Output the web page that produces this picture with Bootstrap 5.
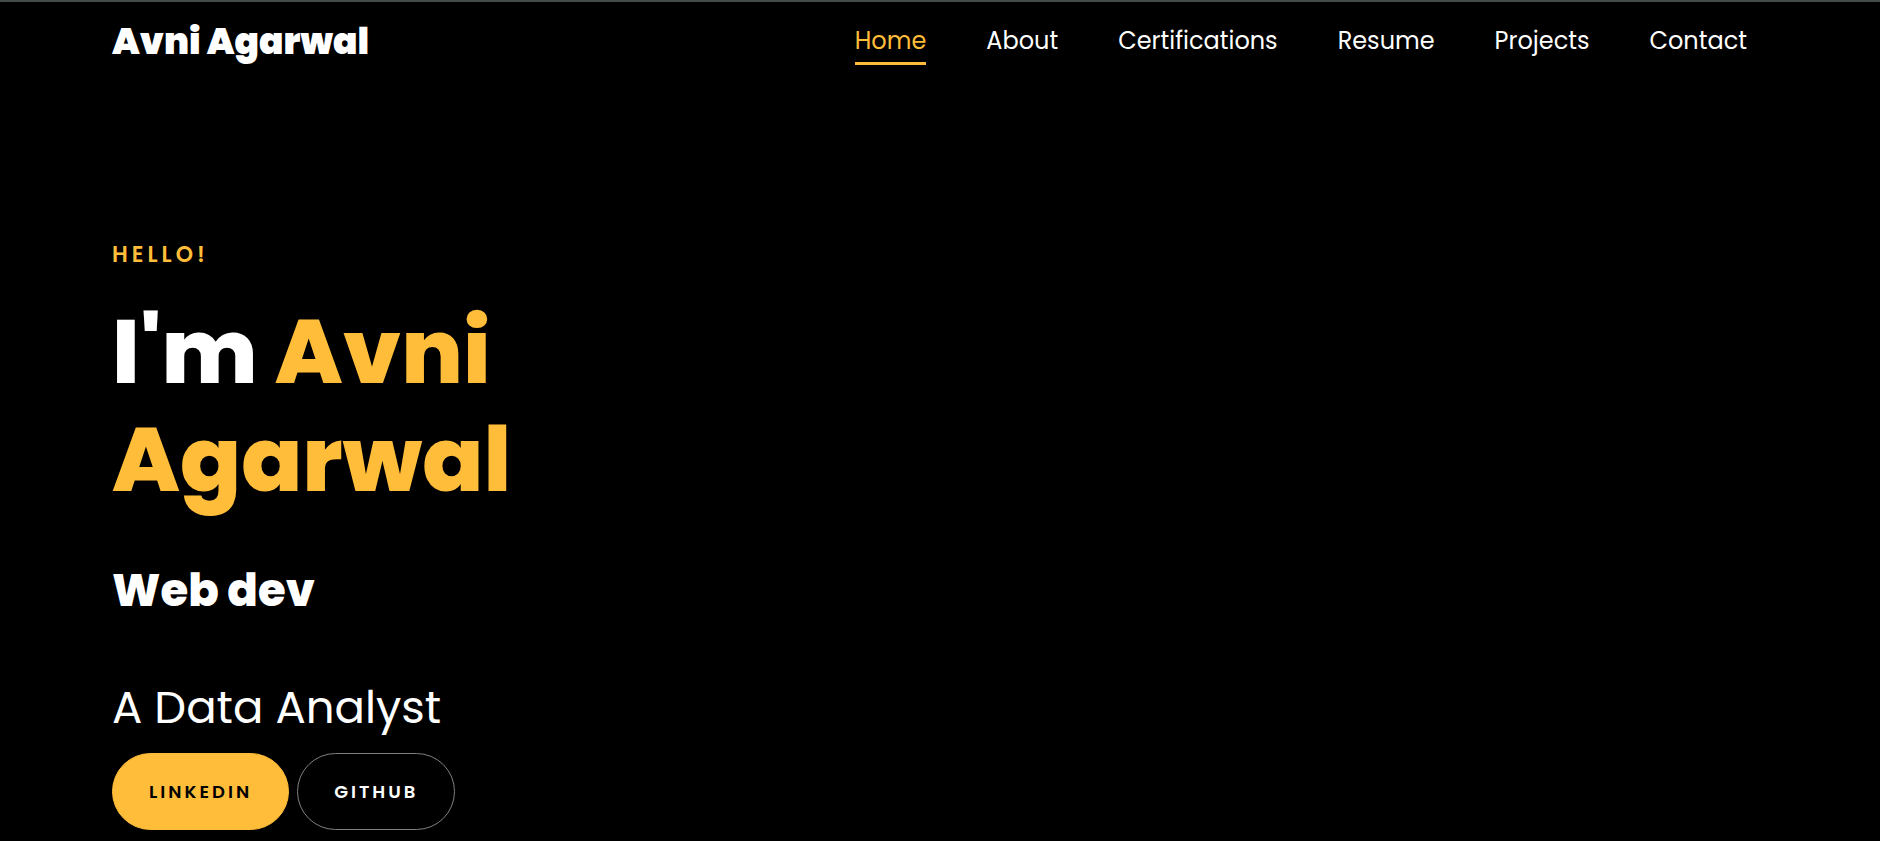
<!DOCTYPE html>
<html lang="en">
<head>
<meta charset="utf-8">
<meta name="viewport" content="width=device-width, initial-scale=1">
<title>Avni Agarwal</title>
<link href="https://cdn.jsdelivr.net/npm/bootstrap@5.3.0/dist/css/bootstrap.min.css" rel="stylesheet">
<style>
  :root { --accent: #ffbd39; }
  body { font-family: Poppins, Inter, sans-serif; background: #000; color: #fff; border-top: 2px solid #454b4b; }
  .page-gutter { padding-left: 112px; padding-right: 112px; }
  .site-nav { min-height: 84px; padding-top: 0; padding-bottom: 0; }
  .site-nav .navbar-brand { font-size: 36px; line-height: 54px; font-weight: 900; color: #fff; padding: 0; margin-top: -4px; }
  .site-nav .navbar-nav { gap: 16px 60px; padding-right: 21px; }
  .site-nav .navbar-nav .nav-link { font-size: 24px; line-height: 36px; color: #fff; padding: 0; }
  .site-nav .nav-link span { display: inline-block; padding-bottom: 3px; border-bottom: 3px solid transparent; }
  .site-nav .navbar-nav .nav-link.active { color: var(--accent); }
  .site-nav .nav-link.active span { border-color: var(--accent); }
  .hero { padding-top: 151px; padding-bottom: 8px; }
  .hello { font-size: 22px; line-height: 36px; font-weight: 600; letter-spacing: 4px; color: var(--accent); }
  .hero h1 { font-size: 90px; line-height: 108px; font-weight: 800; margin: 25px 0 43px; }
  .hero h1 span { color: var(--accent); }
  .hero h2 { font-size: 45px; line-height: 67px; font-weight: 800; margin: 0 0 50px; }
  .hero .role { font-size: 45px; line-height: 67px; font-weight: 400; margin: 0 0 12px; }
  .btn-pill { border-radius: 40px; font-size: 18px; line-height: 27px; letter-spacing: 3px; padding: 24px 36px; color: #fff; border: 1px solid #808080; font-weight: 600; }
  .btn-pill.filled { background: var(--accent); border-color: var(--accent); color: #000; }
</style>
</head>
<body>
<nav class="navbar navbar-expand-lg navbar-dark site-nav page-gutter">
  <a class="navbar-brand" href="#home">Avni Agarwal</a>
  <button class="navbar-toggler" type="button" data-bs-toggle="collapse" data-bs-target="#menu" aria-controls="menu" aria-expanded="false" aria-label="Toggle navigation"><span class="navbar-toggler-icon"></span></button>
  <div class="collapse navbar-collapse" id="menu">
    <ul class="navbar-nav ms-auto">
      <li class="nav-item"><a class="nav-link active" aria-current="page" href="#home"><span>Home</span></a></li>
      <li class="nav-item"><a class="nav-link" href="#about"><span>About</span></a></li>
      <li class="nav-item"><a class="nav-link" href="#certifications"><span>Certifications</span></a></li>
      <li class="nav-item"><a class="nav-link" href="#resume"><span>Resume</span></a></li>
      <li class="nav-item"><a class="nav-link" href="#projects"><span>Projects</span></a></li>
      <li class="nav-item"><a class="nav-link" href="#contact"><span>Contact</span></a></li>
    </ul>
  </div>
</nav>
<main class="hero page-gutter" id="home">
  <div class="row">
    <div class="col-lg-4">
      <div class="hello text-uppercase">Hello!</div>
      <h1>I'm <span>Avni Agarwal</span></h1>
      <h2>Web dev</h2>
      <p class="role">A Data Analyst</p>
      <div class="d-flex flex-wrap gap-2">
        <a class="btn btn-pill filled text-uppercase" href="#linkedin">LinkedIn</a>
        <a class="btn btn-pill text-uppercase" href="#github">GitHub</a>
      </div>
    </div>
  </div>
</main>
<script src="https://cdn.jsdelivr.net/npm/bootstrap@5.3.0/dist/js/bootstrap.bundle.min.js"></script>
</body>
</html>
